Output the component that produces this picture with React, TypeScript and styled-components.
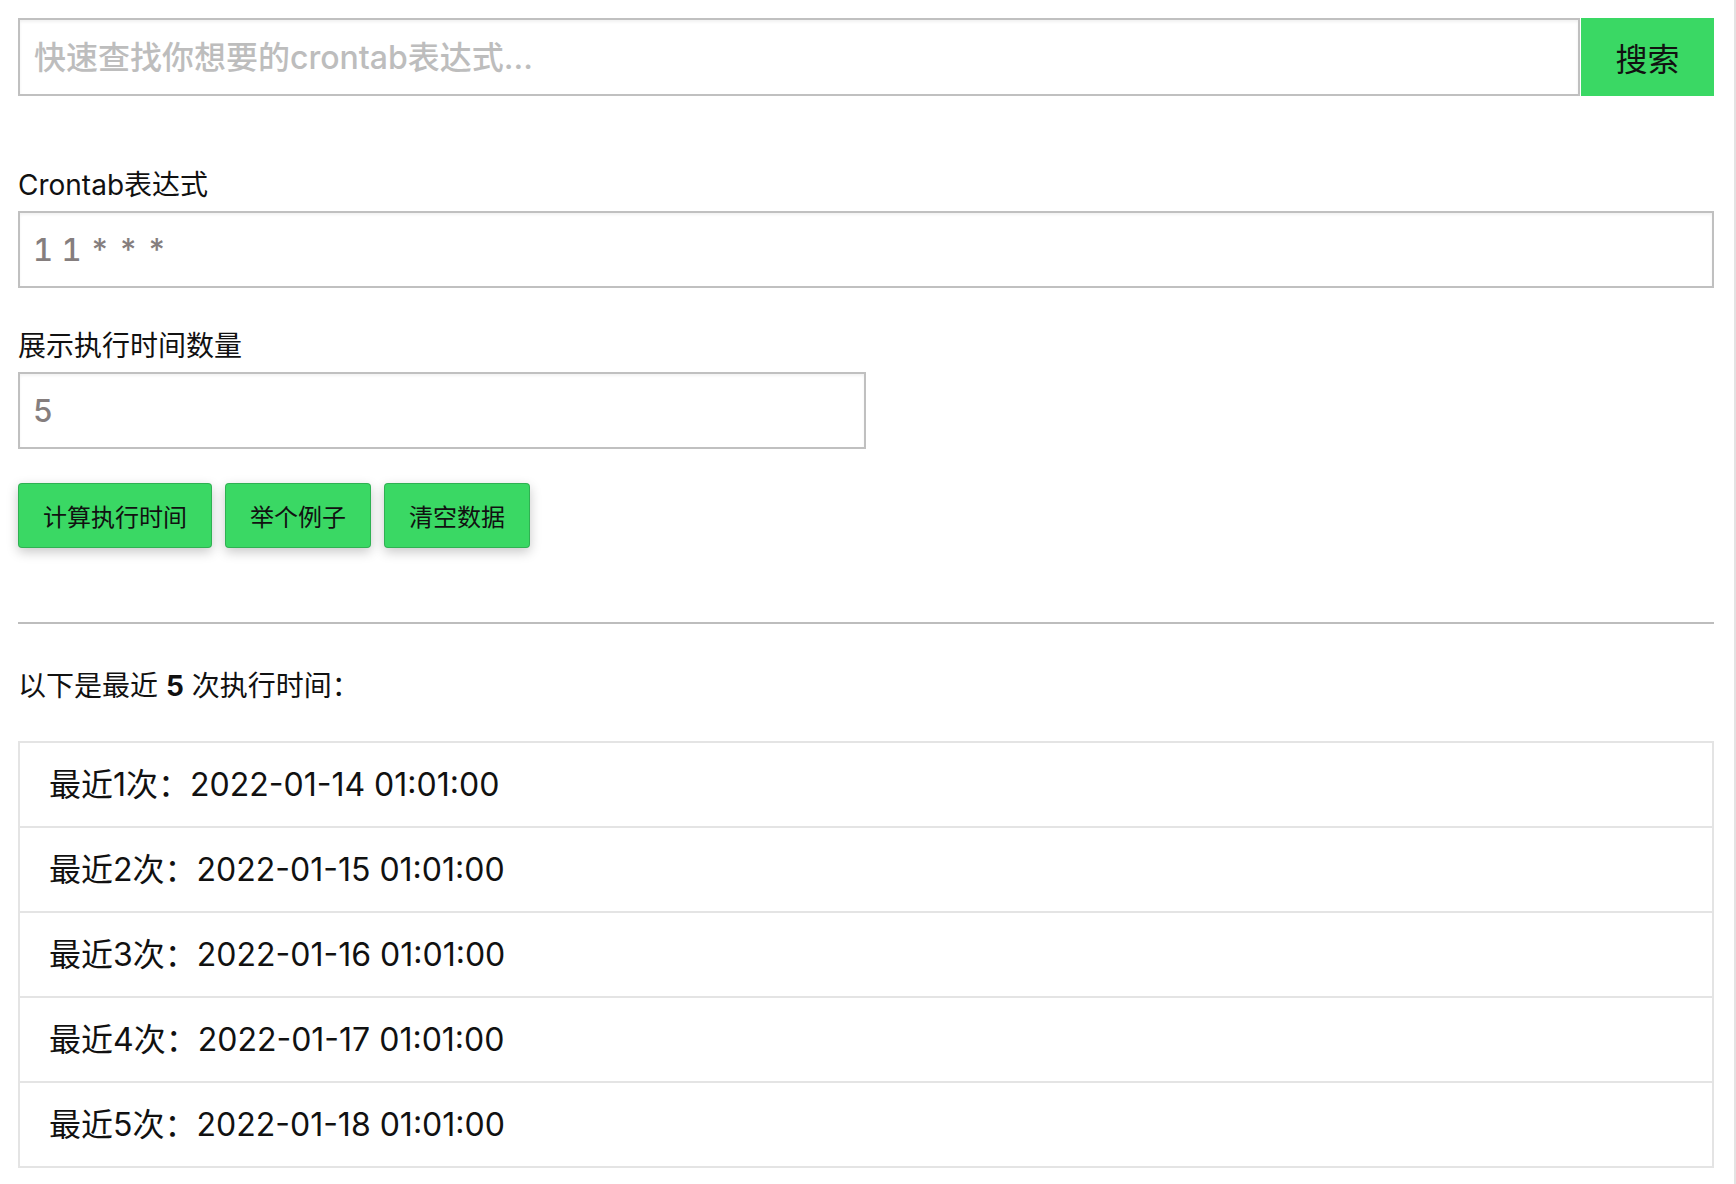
import { useState } from "react";
import styled, { createGlobalStyle } from "styled-components";

const GlobalStyle = createGlobalStyle`
  * {
    box-sizing: border-box;
  }
  body {
    margin: 0;
    background: #fff;
    font-family: Inter, "Noto Sans CJK SC", sans-serif;
    color: #111;
  }
`;

const Page = styled.div`
  min-height: 100vh;
  padding: 18px 20px 16px 18px;
  border-right: 2px solid #e3e3e3;
`;

const SearchBar = styled.div`
  display: flex;
  height: 78px;
`;

const SearchInput = styled.input`
  flex: 1;
  min-width: 0;
  height: 100%;
  padding: 0 14px;
  border: 2px solid #c0c0c0;
  box-shadow: inset 0 2px 3px rgba(0, 0, 0, 0.06);
  background: #fff;
  font-family: inherit;
  font-size: 32px;
  outline: none;
  &::placeholder {
    color: #bdbdbd;
    font-weight: 500;
  }
`;

const SearchButton = styled.button`
  width: 133px;
  height: 100%;
  margin-left: 1px;
  padding: 0;
  border: none;
  background: #3ad864;
  color: #111;
  font-family: inherit;
  font-size: 32px;
  cursor: pointer;
`;

const Field = styled.div<{ top: number }>`
  margin-top: ${(p) => p.top}px;
`;

const Label = styled.label`
  display: block;
  font-size: 28px;
  line-height: 34px;
  margin-bottom: 9px;
`;

const TextInput = styled.input<{ half?: boolean }>`
  display: block;
  width: ${(p) => (p.half ? "50%" : "100%")};
  height: 77px;
  padding: 0 13px;
  border: 2px solid #c0c0c0;
  box-shadow: inset 0 2px 3px rgba(0, 0, 0, 0.05);
  background: #fff;
  font-family: inherit;
  font-size: 31px;
  font-weight: 500;
  font-variant-numeric: tabular-nums;
  color: #857e7e;
  outline: none;
`;

const Actions = styled.div`
  display: flex;
  gap: 13px;
  margin-top: 34px;
`;

const ActionButton = styled.button`
  height: 65px;
  padding: 0 24px;
  border: 1px solid rgba(0, 0, 0, 0.18);
  border-radius: 4px;
  background: #3ad864;
  color: #111;
  font-family: inherit;
  font-size: 24px;
  box-shadow: 0 4px 12px rgba(0, 0, 0, 0.22);
  cursor: pointer;
`;

const Divider = styled.hr`
  margin: 74px 0 0;
  border: none;
  border-top: 2px solid #bdbdbd;
`;

const Summary = styled.p`
  margin: 45px 0 0;
  font-size: 28px;
  line-height: 34px;
  b {
    font-weight: bold;
  }
`;

const ResultList = styled.ul`
  list-style: none;
  margin: 38px 0 0;
  padding: 0;
`;

const ResultItem = styled.li`
  display: flex;
  align-items: center;
  height: 87px;
  padding: 0 29px 6px;
  border: 2px solid #e4e4e4;
  margin-bottom: -2px;
  background: #fff;
  font-size: 32px;
  &:last-child {
    margin-bottom: 0;
  }
`;

const runs = [
  "2022-01-14 01:01:00",
  "2022-01-15 01:01:00",
  "2022-01-16 01:01:00",
  "2022-01-17 01:01:00",
  "2022-01-18 01:01:00",
];

function App() {
  const [expr, setExpr] = useState("1 1 * * *");
  const [count, setCount] = useState("5");

  return (
    <Page>
      <GlobalStyle />
      <SearchBar>
        <SearchInput placeholder="快速查找你想要的crontab表达式..." />
        <SearchButton>搜索</SearchButton>
      </SearchBar>

      <Field top={72}>
        <Label>Crontab表达式</Label>
        <TextInput value={expr} onChange={(e) => setExpr(e.target.value)} />
      </Field>

      <Field top={41}>
        <Label>展示执行时间数量</Label>
        <TextInput half value={count} onChange={(e) => setCount(e.target.value)} />
      </Field>

      <Actions>
        <ActionButton>计算执行时间</ActionButton>
        <ActionButton>举个例子</ActionButton>
        <ActionButton>清空数据</ActionButton>
      </Actions>

      <Divider />

      <Summary>
        以下是最近 <b>5</b> 次执行时间：
      </Summary>

      <ResultList>
        {runs.map((time, i) => (
          <ResultItem key={time}>
            最近{i + 1}次：{time}
          </ResultItem>
        ))}
      </ResultList>
    </Page>
  );
}

export default App;
